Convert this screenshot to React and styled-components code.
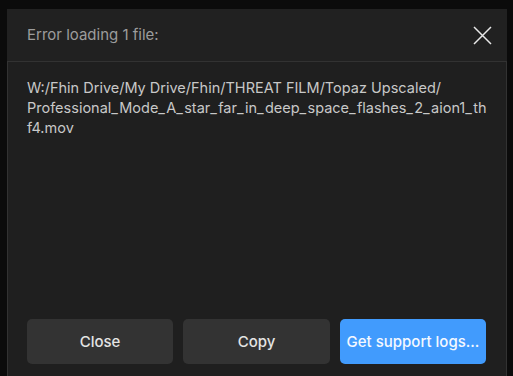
import React from "react"
import styled, { createGlobalStyle } from "styled-components"

const GlobalStyle = createGlobalStyle`
  html, body {
    margin: 0;
    padding: 0;
    background: #0b0b0b;
    font-family: Inter, "Noto Sans", sans-serif;
    overflow: hidden;
  }
`

const Page = styled.div`
  width: 513px;
  height: 376px;
  padding: 9px 0 0 7px;
  box-sizing: border-box;
  overflow: hidden;
`

const Dialog = styled.div`
  width: 500px;
  display: flex;
  flex-direction: column;
  background: #212121;
`

const Header = styled.div`
  height: 52px;
  display: flex;
  align-items: center;
  justify-content: space-between;
  padding: 0 15px 0 20px;
`

const Title = styled.h2`
  margin: 0;
  font-size: 15px;
  font-weight: 400;
  line-height: 20px;
  color: #9c9c9c;
`

const CloseIcon = styled.button`
  width: 20px;
  height: 20px;
  padding: 0;
  border: none;
  background: none;
  display: flex;
  align-items: center;
  justify-content: center;
  cursor: pointer;
`

const Body = styled.div`
  height: 323px;
  box-sizing: border-box;
  display: flex;
  flex-direction: column;
  border: 1px solid #323232;
  border-bottom: none;
  background: #1f1f1f;
  padding: 16px 19px 20px 19px;
`

const PathText = styled.p`
  margin: 0;
  font-size: 14.5px;
  line-height: 20px;
  color: #c8c8c8;
  white-space: nowrap;
`

const Underscore = styled.span`
  letter-spacing: 1.3px;
`

const ButtonRow = styled.div`
  margin-top: auto;
  display: grid;
  grid-template-columns: 146px 147px 146px;
  column-gap: 10px;
`

const Button = styled.button`
  height: 45px;
  border: none;
  border-radius: 5px;
  font-family: Inter, "Noto Sans", sans-serif;
  font-size: 15px;
  font-weight: 500;
  color: ${({ $primary }) => ($primary ? "#f4f8ff" : "#e4e4e4")};
  background: ${({ $primary }) => ($primary ? "#419bfd" : "#333333")};
  padding: 0;
  white-space: nowrap;
  cursor: pointer;
`

const withWideUnderscores = (text) =>
  text.split("_").flatMap((part, i) =>
    i === 0 ? [part] : [<Underscore key={i}>_</Underscore>, part]
  )

const App = () => {
  return (
    <>
      <GlobalStyle />
      <Page>
        <Dialog>
          <Header>
            <Title>Error loading 1 file:</Title>
            <CloseIcon aria-label="Close">
              <svg width="19" height="19" viewBox="0 0 19 19">
                <path
                  d="M1 1 L18 18 M18 1 L1 18"
                  stroke="#e8e8e8"
                  strokeWidth="1.5"
                  fill="none"
                />
              </svg>
            </CloseIcon>
          </Header>
          <Body>
            <PathText>
              W:/Fhin Drive/My Drive/Fhin/THREAT FILM/Topaz Upscaled/
              <br />
              {withWideUnderscores(
                "Professional_Mode_A_star_far_in_deep_space_flashes_2_aion1_th"
              )}
              <br />
              f4.mov
            </PathText>
            <ButtonRow>
              <Button>Close</Button>
              <Button>Copy</Button>
              <Button $primary>Get support logs...</Button>
            </ButtonRow>
          </Body>
        </Dialog>
      </Page>
    </>
  )
}

export default App
